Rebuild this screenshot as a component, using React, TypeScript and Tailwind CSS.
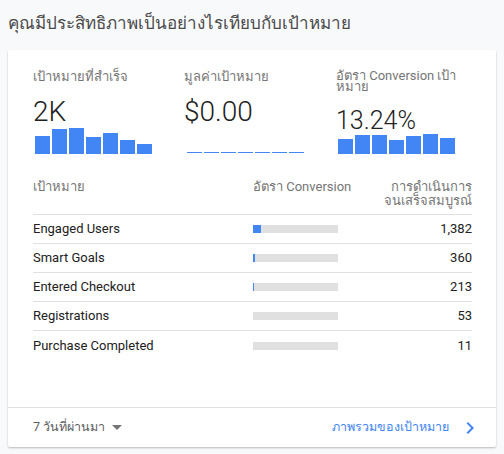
import React from "react";

const font = { fontFamily: "Roboto, 'Noto Sans', 'DejaVu Sans', sans-serif" };

const goalsBars = [18, 25, 26, 17, 21, 14, 10];
const rateBars = [15, 19, 19, 14, 18, 20, 16];

const rows = [
  { name: "Engaged Users", fill: 8, count: "1,382" },
  { name: "Smart Goals", fill: 2, count: "360" },
  { name: "Entered Checkout", fill: 1, count: "213" },
  { name: "Registrations", fill: 0, count: "53" },
  { name: "Purchase Completed", fill: 0, count: "11" },
];

function Bars({ data }: { data: number[] }) {
  return (
    <div className="flex items-end gap-[2px] h-[26px] pl-[2px]">
      {data.map((h, i) => (
        <div key={i} className="w-[15px] bg-[#4285f4]" style={{ height: h }} />
      ))}
    </div>
  );
}

function Dashes() {
  return (
    <div className="flex items-end gap-[2px] h-[26px] pb-[1px] pl-[3px]">
      {Array.from({ length: 7 }).map((_, i) => (
        <div key={i} className="w-[15px] h-[1px] bg-[#4285f4]" />
      ))}
    </div>
  );
}

export default function App() {
  return (
    <div className="w-[504px] h-[454px] bg-[#f8f9fa] overflow-hidden" style={font}>
      <div className="h-[50px] px-2 flex items-center">
        <h1 className="text-[17px] text-[#4a4a4a] leading-none -mt-[4px]">
          คุณมีประสิทธิภาพเป็นอย่างไรเทียบกับเป้าหมาย
        </h1>
      </div>

      <div className="mx-2 h-[397px] bg-white rounded-[2px] shadow-[0_1px_2px_rgba(0,0,0,0.25)] flex flex-col">
        <div className="pl-[25px] pr-6">
          {/* metric tiles */}
          <div className="grid grid-cols-[151px_152px_1fr] h-[104px] pt-[20px]">
            <div className="flex flex-col">
              <div className="text-[13px] leading-[14px] text-[#757575]">เป้าหมายที่สำเร็จ</div>
              <div className="mt-auto text-[28px] font-light leading-[32px] text-[#212121]">2K</div>
              <Bars data={goalsBars} />
            </div>
            <div className="flex flex-col">
              <div className="text-[13px] leading-[14px] text-[#757575]">มูลค่าเป้าหมาย</div>
              <div className="mt-auto text-[28px] font-light leading-[32px] text-[#212121]">$0.00</div>
              <Dashes />
            </div>
            <div className="flex flex-col">
              <div className="text-[13px] leading-[11px] text-[#757575]">
                อัตรา Conversion เป้า
                <br />
                หมาย
              </div>
              <div className="mt-auto text-[25px] font-light leading-[26px] text-[#212121] -mb-[6px] relative">13.24%</div>
              <Bars data={rateBars} />
            </div>
          </div>

          {/* goals table */}
          <div className="mt-[26px] grid grid-cols-[220px_1fr_120px] text-[13px]">
            <div className="text-[#757575] leading-[14px] pb-[6px] border-b border-[#e0e0e0]">เป้าหมาย</div>
            <div className="text-[#757575] leading-[14px] pb-[6px] border-b border-[#e0e0e0]">อัตรา Conversion</div>
            <div className="text-[#757575] leading-[14px] pb-[6px] border-b border-[#e0e0e0] text-right">
              การดำเนินการ
              <br />
              จนเสร็จสมบูรณ์
            </div>
            {rows.map((r, i) => {
              const line = i < rows.length - 1 ? "border-b border-[#e0e0e0]" : "";
              return (
                <React.Fragment key={r.name}>
                  <div className={`h-[29px] flex items-center text-[#212121] ${line}`}>{r.name}</div>
                  <div className={`h-[29px] flex items-center ${line}`}>
                    <div className="w-[85px] h-[8px] bg-[#e0e0e0] flex">
                      <div className="h-full bg-[#4285f4]" style={{ width: r.fill }} />
                    </div>
                  </div>
                  <div className={`h-[29px] flex items-center justify-end text-[#212121] ${line}`}>{r.count}</div>
                </React.Fragment>
              );
            })}
          </div>
        </div>

        <div className="mt-auto h-[40px] border-t border-[#e0e0e0] pl-[25px] pr-[14px] flex items-center justify-between text-[12.5px]">
          <div className="flex items-center gap-[6px] text-[#616161]">
            <span>7 วันที่ผ่านมา</span>
            <svg width="10" height="5" viewBox="0 0 10 5" className="ml-[1px]">
              <path d="M0 0l5 5 5-5z" fill="#757575" />
            </svg>
          </div>
          <div className="flex items-center gap-[9px] text-[#4285f4]">
            <span>ภาพรวมของเป้าหมาย</span>
            <svg width="24" height="24" viewBox="0 0 24 24">
              <path d="M10 6L8.59 7.41 13.17 12l-4.58 4.59L10 18l6-6z" fill="#4285f4" />
            </svg>
          </div>
        </div>
      </div>
    </div>
  );
}
